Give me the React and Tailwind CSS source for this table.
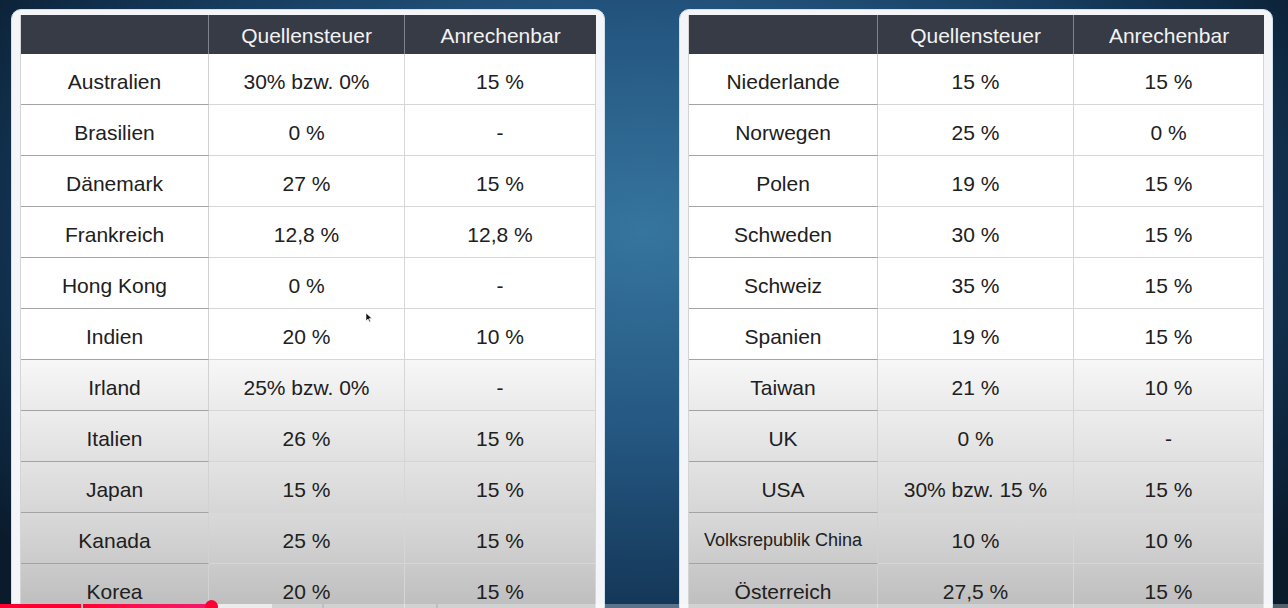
const LEFT = [
  ["Australien", "30% bzw. 0%", "15 %"],
  ["Brasilien", "0 %", "-"],
  ["Dänemark", "27 %", "15 %"],
  ["Frankreich", "12,8 %", "12,8 %"],
  ["Hong Kong", "0 %", "-"],
  ["Indien", "20 %", "10 %"],
  ["Irland", "25% bzw. 0%", "-"],
  ["Italien", "26 %", "15 %"],
  ["Japan", "15 %", "15 %"],
  ["Kanada", "25 %", "15 %"],
  ["Korea", "20 %", "15 %"],
];

const RIGHT = [
  ["Niederlande", "15 %", "15 %"],
  ["Norwegen", "25 %", "0 %"],
  ["Polen", "19 %", "15 %"],
  ["Schweden", "30 %", "15 %"],
  ["Schweiz", "35 %", "15 %"],
  ["Spanien", "19 %", "15 %"],
  ["Taiwan", "21 %", "10 %"],
  ["UK", "0 %", "-"],
  ["USA", "30% bzw. 15 %", "15 %"],
  ["Volksrepublik China", "10 %", "10 %"],
  ["Österreich", "27,5 %", "15 %"],
];

// row shading gets darker towards the bottom of the slide
const SHADES = [
  "bg-white",
  "bg-white",
  "bg-white",
  "bg-white",
  "bg-white",
  "bg-white",
  "bg-gradient-to-b from-[#f7f7f7] to-[#eaeaea]",
  "bg-gradient-to-b from-[#ededed] to-[#e0e0e0]",
  "bg-gradient-to-b from-[#e3e3e3] to-[#d6d6d6]",
  "bg-gradient-to-b from-[#d9d9d9] to-[#cbcbcb]",
  "bg-gradient-to-b from-[#cbcbcb] to-[#bcbcbc]",
];

function Table({ rows, firstCol }) {
  return (
    <div className="w-[594px] shrink-0 rounded-[10px] bg-[#f3f5f8] border border-[#cfe0ee] pt-[5px] px-[8px]">
      <div className={`grid ${firstCol} border-l border-[#d4d4d4]`}>
        <div className="h-[39px] bg-[#373b46] border-r border-[#80838c]" />
        <div className="h-[39px] pt-[2px] bg-[#373b46] border-r border-[#80838c] flex items-center justify-center text-[#f2f2f2] text-[21px]">
          Quellensteuer
        </div>
        <div className="h-[39px] pt-[2px] bg-[#373b46] flex items-center justify-center text-[#f2f2f2] text-[21px]">
          Anrechenbar
        </div>
        {rows.map((r, i) => (
          <Row key={r[0]} cells={r} shade={SHADES[i]} />
        ))}
      </div>
    </div>
  );
}

function Row({ cells, shade }) {
  const small = cells[0].length > 14;
  return (
    <>
      <div
        className={`h-[51px] pt-[5px] ${shade} border-r border-[#d2d2d2] border-b border-b-[#a3a3a3] flex items-center justify-center text-[#202020] ${small ? "text-[18px]" : "text-[21px]"}`}
      >
        {cells[0]}
      </div>
      <div className={`h-[51px] pt-[5px] ${shade} border-r border-b border-[#d6d6d6] flex items-center justify-center text-[#202020] text-[21px]`}>
        {cells[1]}
      </div>
      <div className={`h-[51px] pt-[5px] ${shade} border-r border-b border-[#d6d6d6] flex items-center justify-center text-[#202020] text-[21px]`}>
        {cells[2]}
      </div>
    </>
  );
}

export default function App() {
  return (
    <div
      className="relative w-[1288px] h-[608px] overflow-hidden bg-[radial-gradient(ellipse_62%_85%_at_50%_38%,#36759e_0%,#245680_40%,#133555_75%,#0a1b2c_100%)]"
      style={{ fontFamily: '"Liberation Sans", Arial, sans-serif' }}
    >
      <div className="flex items-start pt-[9px] pl-[11px] gap-[74px]">
        <Table rows={LEFT} firstCol="grid-cols-[188px_196px_1fr]" />
        <Table rows={RIGHT} firstCol="grid-cols-[189px_196px_1fr]" />
      </div>

      {/* mouse pointer */}
      <svg className="absolute left-[365px] top-[312px]" width="8" height="11" viewBox="0 0 8 11">
        <path d="M1 1 L1 9 L3 7 L4.5 10 L5.6 9.5 L4.2 6.6 L7 6.6 Z" fill="#111" stroke="#fff" strokeWidth="0.6" />
      </svg>

      {/* video progress bar */}
      <div className="absolute left-0 right-0 bottom-0 h-[4px] flex">
        <div className="w-[81px] bg-[#ff0033]" />
        <div className="w-[2px]" />
        <div className="w-[128px] bg-gradient-to-r from-[#ff0033] to-[#f01a6a]" />
        <div className="w-[61px] bg-white/70" />
        <div className="w-[50px] bg-white/30" />
        <div className="w-[2px]" />
        <div className="w-[112px] bg-white/30" />
        <div className="w-[2px]" />
        <div className="flex-1 bg-white/30" />
      </div>
      <div className="absolute left-[205px] top-[600px] w-[13px] h-[13px] rounded-full bg-[#ff0033]" />
    </div>
  );
}
